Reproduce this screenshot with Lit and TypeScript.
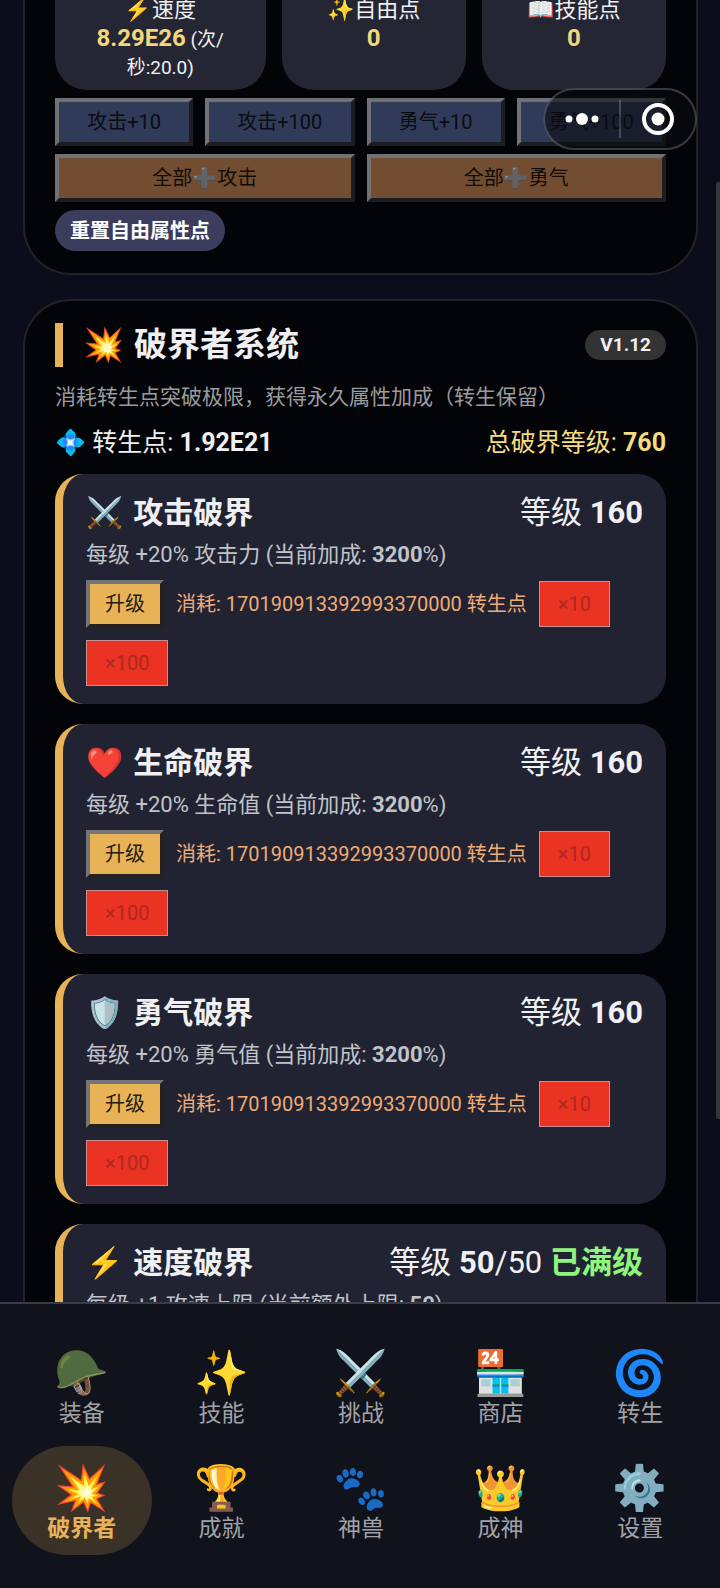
import { LitElement, html, css, nothing } from "lit";
import { customElement, property } from "lit/decorators.js";

const fontStack = css`Roboto, "Noto Sans CJK SC", "Noto Color Emoji", sans-serif`;

interface Upgrade {
  icon: string;
  name: string;
  level: string;
  cap?: string;
  effect: string;
  bonusLabel: string;
  bonus: string;
  bonusUnit: string;
}

const COST = "170190913392993370000";

const UPGRADES: Upgrade[] = [
  { icon: "⚔️", name: "攻击破界", level: "160", effect: "+20% 攻击力", bonusLabel: "当前加成", bonus: "3200", bonusUnit: "%" },
  { icon: "❤️", name: "生命破界", level: "160", effect: "+20% 生命值", bonusLabel: "当前加成", bonus: "3200", bonusUnit: "%" },
  { icon: "🛡️", name: "勇气破界", level: "160", effect: "+20% 勇气值", bonusLabel: "当前加成", bonus: "3200", bonusUnit: "%" },
  { icon: "⚡", name: "速度破界", level: "50", cap: "50", effect: "+1 攻速上限", bonusLabel: "当前额外上限", bonus: "50", bonusUnit: "" },
];

const TABS = [
  { icon: "🪖", label: "装备" },
  { icon: "✨", label: "技能" },
  { icon: "⚔️", label: "挑战" },
  { icon: "🏪", label: "商店" },
  { icon: "🌀", label: "转生" },
  { icon: "💥", label: "破界者", active: true },
  { icon: "🏆", label: "成就" },
  { icon: "🐾", label: "神兽" },
  { icon: "👑", label: "成神" },
  { icon: "⚙️", label: "设置" },
];

@customElement("upgrade-card")
class UpgradeCard extends LitElement {
  @property({ attribute: false }) item!: Upgrade;

  static styles = css`
    :host {
      display: block;
      box-sizing: border-box;
      padding: 18px 23px;
      border-left: 8px solid #e8b257;
      border-radius: 28px;
      background: #212333;
    }
    .head {
      display: flex;
      align-items: center;
      justify-content: space-between;
      font-size: 31px;
      line-height: 42px;
      color: #f0f0f2;
    }
    .name {
      display: flex;
      gap: 10px;
      margin: 0;
      font-size: 30px;
      font-weight: 700;
    }
    .full {
      color: #90f57c;
      font-weight: 700;
    }
    .effect {
      margin: 5px 0 9px;
      font-size: 22px;
      line-height: 32px;
      color: #c2c3c8;
    }
    .actions {
      display: flex;
      flex-wrap: wrap;
      align-items: center;
      gap: 12px;
    }
    button {
      box-sizing: border-box;
      margin: 0;
      font: inherit;
      font-size: 20px;
      line-height: 24px;
    }
    .up {
      height: 48px;
      padding: 0 15px;
      border: 4px solid;
      border-color: #747479 #24211f #24211f #747479;
      background: #e8b257;
      color: #241c10;
    }
    .bulk {
      height: 46px;
      padding: 0 18px;
      border: 1px solid #c98f90;
      background: #ea3323;
      color: #ae281f;
    }
    .cost {
      font-size: 20px;
      line-height: 28px;
      color: #f0ab74;
    }
  `;

  render() {
    const u = this.item;
    return html`
      <div class="head">
        <h3 class="name"><span>${u.icon}</span><span>${u.name}</span></h3>
        <span>等级 <b>${u.level}</b>${u.cap ? html`/${u.cap} <span class="full">已满级</span>` : nothing}</span>
      </div>
      <p class="effect">每级 ${u.effect} (${u.bonusLabel}: <b>${u.bonus}</b>${u.bonusUnit})</p>
      ${u.cap
        ? nothing
        : html`<div class="actions">
            <button class="up">升级</button>
            <span class="cost">消耗: ${COST} 转生点</span>
            <button class="bulk" disabled>×10</button>
            <button class="bulk" disabled>×100</button>
          </div>`}
    `;
  }
}

@customElement("tab-bar")
class TabBar extends LitElement {
  static styles = css`
    :host {
      display: block;
      border-top: 2px solid #3a3c43;
      background: #10121c;
    }
    nav {
      display: grid;
      grid-template-columns: repeat(5, minmax(0, 1fr));
      gap: 6px 0;
      padding: 27px 10px 33px 12px;
    }
    a {
      display: flex;
      flex-direction: column;
      align-items: center;
      padding: 14px 0;
      border-radius: 56px;
      color: #a2a2a6;
      font-size: 23px;
      line-height: 24px;
      text-decoration: none;
    }
    .icon {
      font-size: 44px;
      line-height: 57px;
    }
    .active {
      background: #3a3127;
      color: #e8b257;
      font-weight: 700;
    }
  `;

  render() {
    return html`<nav>
      ${TABS.map(
        (t) => html`<a href="#" class=${t.active ? "active" : ""}>
          <span class="icon">${t.icon}</span><span>${t.label}</span>
        </a>`
      )}
    </nav>`;
  }
}

@customElement("app-root")
class AppRoot extends LitElement {
  static styles = css`
    :host {
      position: relative;
      display: flex;
      flex-direction: column;
      height: 100vh;
      overflow: hidden;
      background: #0b0e1a;
      color: #f0f0f2;
      font-family: ${fontStack};
    }
    main {
      flex: 1;
      min-height: 0;
      display: flex;
      flex-direction: column;
      gap: 24px;
      padding: 0 22px 0 23px;
      overflow: hidden;
    }
    .panel {
      flex: none;
      padding: 22px 30px;
      border: 2px solid #222326;
      border-radius: 48px;
      background: #030408;
    }
    .status {
      padding-top: 0;
      border-top: 0;
      border-radius: 0 0 48px 48px;
      display: flex;
      flex-direction: column;
      gap: 8px;
    }
    .stats {
      display: grid;
      grid-template-columns: minmax(0, 8fr) minmax(0, 7fr) minmax(0, 7fr);
      gap: 16px;
    }
    .stat {
      padding: 0 28px 8px;
      border-radius: 0 0 32px 32px;
      background: #252634;
      text-align: center;
      font-size: 19px;
      line-height: 28px;
    }
    .stat-name {
      margin-bottom: 6px;
      font-size: 22px;
      line-height: 20px;
    }
    .stat b {
      font-size: 24px;
      line-height: 24px;
      color: #f5d67b;
    }
    .row {
      display: flex;
      gap: 12px;
    }
    button {
      box-sizing: border-box;
      margin: 0;
      font: inherit;
      font-size: 20px;
      line-height: 24px;
    }
    .row button {
      flex: 1 1 auto;
      height: 48px;
      padding: 0 12px;
      border: 4px solid;
      border-color: #707174 #1c1d20 #1c1d20 #707174;
      background: #303b59;
      color: #0a0c12;
    }
    .row .all {
      flex-basis: 0;
      background: #734d31;
      color: #120c08;
    }
    .reset {
      align-self: flex-start;
      height: 41px;
      padding: 0 15px;
      border: 0;
      border-radius: 21px;
      background: #3c3c5c;
      color: #fff;
      font-weight: 700;
    }
    .title {
      display: flex;
      align-items: center;
      justify-content: space-between;
    }
    h2 {
      display: flex;
      gap: 10px;
      margin: 0;
      padding-left: 20px;
      border-left: 8px solid #e8b257;
      font-size: 33px;
      line-height: 44px;
    }
    .version {
      padding: 0 15px;
      border-radius: 15px;
      background: #333334;
      font-size: 19px;
      font-weight: 700;
      line-height: 30px;
    }
    .intro {
      margin: 14px 0 12px;
      font-size: 21px;
      line-height: 32px;
      color: #9b9b9d;
    }
    .points {
      display: flex;
      justify-content: space-between;
      margin-bottom: 13px;
      font-size: 25px;
      line-height: 36px;
    }
    .total {
      color: #f5dc80;
    }
    .cards {
      display: grid;
      gap: 20px;
    }
    .capsule {
      position: absolute;
      top: 88px;
      right: 23px;
      box-sizing: border-box;
      width: 154px;
      height: 62px;
      display: grid;
      grid-template-columns: 1fr 2px 1fr;
      align-items: center;
      justify-items: center;
      border: 2px solid rgba(255, 255, 255, 0.2);
      border-radius: 31px;
      background: rgba(8, 12, 16, 0.6);
    }
    .capsule button {
      display: flex;
      padding: 0;
      border: 0;
      background: none;
    }
    .capsule svg {
      fill: #fff;
    }
    .divider {
      width: 2px;
      height: 38px;
      background: rgba(255, 255, 255, 0.2);
    }
    .thumb {
      position: absolute;
      top: 182px;
      right: 0;
      width: 4px;
      height: 937px;
      border-radius: 2px 0 0 2px;
      background: #33353d;
    }
  `;

  render() {
    return html`
      <main>
        <section class="panel status">
          <div class="stats">
            <div class="stat">
              <div class="stat-name">⚡速度</div>
              <b>8.29E26</b> (次/<br />秒:20.0)
            </div>
            <div class="stat">
              <div class="stat-name">✨自由点</div>
              <b>0</b>
            </div>
            <div class="stat">
              <div class="stat-name">📖技能点</div>
              <b>0</b>
            </div>
          </div>
          <div class="row">
            <button disabled>攻击+10</button>
            <button disabled>攻击+100</button>
            <button disabled>勇气+10</button>
            <button disabled>勇气+100</button>
          </div>
          <div class="row">
            <button class="all" disabled>全部➕攻击</button>
            <button class="all" disabled>全部➕勇气</button>
          </div>
          <button class="reset">重置自由属性点</button>
        </section>

        <section class="panel">
          <div class="title">
            <h2><span>💥</span><span>破界者系统</span></h2>
            <span class="version">V1.12</span>
          </div>
          <p class="intro">消耗转生点突破极限，获得永久属性加成（转生保留）</p>
          <div class="points">
            <span>💠 转生点: <b>1.92E21</b></span>
            <span class="total">总破界等级: <b>760</b></span>
          </div>
          <div class="cards">
            ${UPGRADES.map((u) => html`<upgrade-card .item=${u}></upgrade-card>`)}
          </div>
        </section>
      </main>
      <tab-bar></tab-bar>
      <div class="capsule">
        <button aria-label="更多">
          <svg width="34" height="14" viewBox="0 0 34 14">
            <circle cx="4" cy="7" r="3.5" />
            <circle cx="17" cy="7" r="6" />
            <circle cx="30" cy="7" r="3.5" />
          </svg>
        </button>
        <span class="divider"></span>
        <button aria-label="关闭">
          <svg width="34" height="34" viewBox="0 0 34 34">
            <circle cx="17" cy="17" r="14" fill="none" stroke="#fff" stroke-width="4" />
            <circle cx="17" cy="17" r="6.5" />
          </svg>
        </button>
      </div>
      <div class="thumb"></div>
    `;
  }
}
